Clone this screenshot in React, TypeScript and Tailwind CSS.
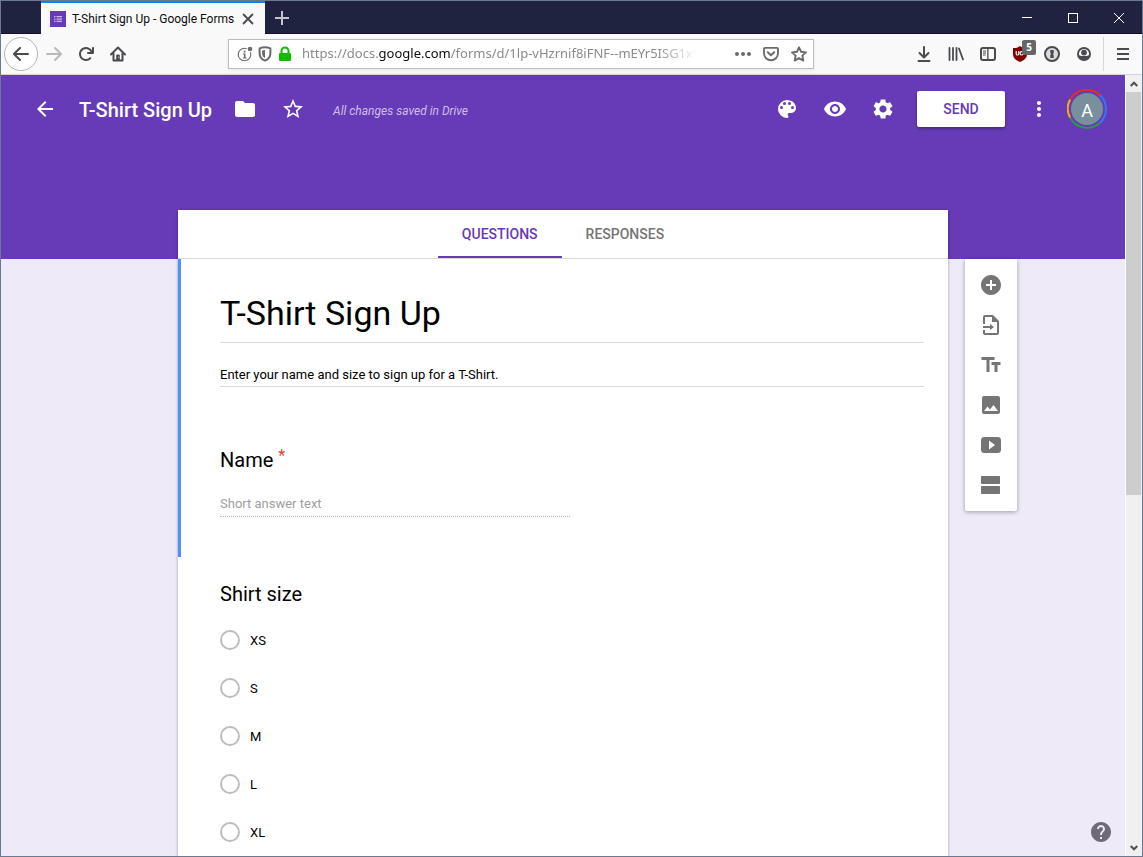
import type { ReactNode } from "react";
import {
  MdAddCircle,
  MdArrowBack,
  MdFolder,
  MdHelp,
  MdImage,
  MdMoreVert,
  MdPalette,
  MdSettings,
  MdStarBorder,
  MdTextFields,
  MdVisibility,
} from "react-icons/md";

const sizes = ["XS", "S", "M", "L", "XL"];

function Icon({ children }: { children: ReactNode }) {
  return (
    <svg viewBox="0 0 16 16" className="size-4 shrink-0" fill="currentColor" aria-hidden="true">
      {children}
    </svg>
  );
}

function ToolButton({ label, children }: { label: string; children: ReactNode }) {
  return (
    <button type="button" aria-label={label} className="relative flex size-8 shrink-0 items-center justify-center">
      {children}
    </button>
  );
}

function TitleBar() {
  return (
    <div className="flex h-[33px] shrink-0 bg-[#202340] pl-10 shadow-[inset_0_-1px_#140f26]">
      <div className="z-10 flex w-56 items-center border-t-2 border-[#0a84ff] bg-[#f9f9fa] pr-[9px] pl-[9px]">
        <svg viewBox="0 0 16 16" className="size-4 shrink-0" aria-hidden="true">
          <path fill="#673ab7" d="M0 0h16v16H0z" />
          <path fill="#c9b8e8" d="M4 5h1.500v1.300H4zM6.500 5H12v1.300H6.500zM4 7.400h1.500v1.300H4zM6.500 7.400H12v1.300H6.500zM4 9.800h1.500v1.300H4zM6.500 9.800H12v1.300H6.500z" />
        </svg>
        <span className="ml-1.5 flex-1 whitespace-nowrap font-[Roboto,sans-serif] text-[12px] text-[#0c0c0d]">
          T-Shirt Sign Up - Google Forms
        </span>
        <button type="button" aria-label="Close tab" className="flex size-4 shrink-0 items-center justify-center">
          <svg viewBox="0 0 12 12" className="size-3" fill="none" stroke="#4a4a4f" strokeWidth="1.800" strokeLinecap="round">
            <path d="M1.500 1.500l9 9M10.500 1.500l-9 9" />
          </svg>
        </button>
      </div>
      <button type="button" aria-label="New tab" className="flex w-[34px] items-center justify-center text-[#c5c5cf]">
        <svg viewBox="0 0 16 16" className="size-4" fill="none" stroke="currentColor" strokeWidth="2">
          <path d="M8 1v14M1 8h14" />
        </svg>
      </button>
      <div className="ml-auto flex text-white">
        <button type="button" aria-label="Minimize" className="flex w-[46px] items-center justify-center">
          <svg viewBox="0 0 10 10" className="size-2.5" shapeRendering="crispEdges">
            <path d="M0 4h10v1H0z" fill="currentColor" />
          </svg>
        </button>
        <button type="button" aria-label="Maximize" className="flex w-[46px] items-center justify-center">
          <span className="size-2.5 border border-white" />
        </button>
        <button type="button" aria-label="Close window" className="flex w-[46px] items-center justify-center">
          <svg viewBox="0 0 10 10" className="size-2.5" fill="none" stroke="currentColor">
            <path d="M0 0l10 10M10 0L0 10" />
          </svg>
        </button>
      </div>
    </div>
  );
}

function AddressBar() {
  return (
    <div className="ml-[94px] flex h-[30px] max-w-[586px] flex-1 items-center border border-[#bcbcbc] bg-white pr-1.5 pl-2 text-[#6b6b6e] shadow-[0_1px_3px_rgba(0,0,0,0.08)]">
      <div className="flex gap-1">
        <Icon>
          <circle cx="7.500" cy="8.500" r="6.300" fill="none" stroke="currentColor" strokeWidth="1.100" />
          <path d="M6.700 4.800h1.800v1.700H6.700zM6 7.500h2.500v4H9.500v1H6v-1h.900V8.500H6z" />
          <circle cx="13" cy="3" r="3.300" fill="#fff" />
          <circle cx="13" cy="3" r="2.300" />
        </Icon>
        <Icon>
          <path
            d="M8 1.300c1.800 0 3.700.4 5.400 1.100v4.800c0 3.600-2 6-5.400 7.500C4.600 13.200 2.600 10.800 2.600 7.200V2.400C4.300 1.700 6.200 1.300 8 1.300z"
            fill="none"
            stroke="currentColor"
            strokeWidth="2"
            strokeLinejoin="round"
          />
          <path d="M8 4v8c-1.800-1-2.900-2.500-2.900-4.800V4.500C6 4.200 7 4 8 4z" />
        </Icon>
        <svg viewBox="0 0 16 16" className="size-4 text-[#12bc00]" fill="currentColor" aria-hidden="true">
          <path d="M3 7h10a1 1 0 0 1 1 1v6a1 1 0 0 1-1 1H3a1 1 0 0 1-1-1V8a1 1 0 0 1 1-1z" />
          <path d="M4.500 8V5a3.500 3.500 0 0 1 7 0v3" fill="none" stroke="currentColor" strokeWidth="2" />
        </svg>
      </div>
      <div className="ml-[9px] min-w-0 flex-1 overflow-hidden whitespace-nowrap font-['Noto_Sans',sans-serif] text-[13px] text-[#8a8a8a] [mask-image:linear-gradient(to_right,#000_calc(100%_-_40px),transparent)]">
        https://docs.<span className="text-[#0c0c0d]">google.com</span>/forms/d/1lp-vHzrnif8iFNF--mEYr5ISG1x9
      </div>
      <div className="ml-[38px] flex w-[72px] shrink-0 justify-between">
        <button type="button" aria-label="Page actions">
          <Icon>
            <circle cx="2" cy="8" r="2" />
            <circle cx="8" cy="8" r="2" />
            <circle cx="14" cy="8" r="2" />
          </Icon>
        </button>
        <button type="button" aria-label="Save to Pocket">
          <Icon>
            <path d="M2 1.900h12c.6 0 1 .4 1 1V7.300a7 7 0 0 1-14 0V2.900c0-.6.4-1 1-1z" fill="none" stroke="currentColor" strokeWidth="1.900" />
            <path d="M4.800 6.300L8 9.300l3.200-3" fill="none" stroke="currentColor" strokeWidth="2" strokeLinecap="round" strokeLinejoin="round" />
          </Icon>
        </button>
        <button type="button" aria-label="Bookmark this page">
          <Icon>
            <path
              d="M8 1.300l2.050 4.450 4.950.6-3.650 3.300.95 4.900L8 12.100l-4.300 2.450.95-4.900L1 6.350l4.950-.6z"
              fill="none"
              stroke="currentColor"
              strokeWidth="1.900"
              strokeLinejoin="round"
            />
          </Icon>
        </button>
      </div>
    </div>
  );
}

function BrowserToolbar() {
  return (
    <div className="flex h-[41px] shrink-0 items-center border-b border-[#d4d4d6] bg-[#f9f9fa] pl-[3px] text-[#4a4a4f]">
      <button
        type="button"
        aria-label="Back"
        className="flex size-[34px] shrink-0 items-center justify-center rounded-full border border-[#b5b5b5] bg-white"
      >
        <Icon>
          <path d="M15 7H3.414l4.293-4.293a1 1 0 0 0-1.414-1.414l-6 6a1 1 0 0 0 0 1.414l6 6a1 1 0 0 0 1.414-1.414L3.414 9H15a1 1 0 0 0 0-2z" />
        </Icon>
      </button>
      <button type="button" aria-label="Forward" disabled className="flex size-8 shrink-0 items-center justify-center text-[#b9b9bb]">
        <Icon>
          <path d="M1 7h11.586L8.293 2.707a1 1 0 0 1 1.414-1.414l6 6a1 1 0 0 1 0 1.414l-6 6a1 1 0 0 1-1.414-1.414L12.586 9H1a1 1 0 0 1 0-2z" />
        </Icon>
      </button>
      <ToolButton label="Reload">
        <Icon>
          <path d="M15 1a1 1 0 0 0-1 1v2.418A6.995 6.995 0 1 0 8 15a6.954 6.954 0 0 0 4.950-2.050 1 1 0 0 0-1.414-1.414A5.019 5.019 0 1 1 12.549 6H10a1 1 0 0 0 0 2h5a1 1 0 0 0 1-1V2a1 1 0 0 0-1-1z" />
        </Icon>
      </ToolButton>
      <ToolButton label="Home">
        <Icon>
          <path d="M1 8.500l7-7 7 7M3.500 7v7.500h9V7" fill="none" stroke="currentColor" strokeWidth="2" strokeLinecap="round" strokeLinejoin="round" />
          <path d="M6.200 14V9.500a1 1 0 0 1 1-1h1.600a1 1 0 0 1 1 1V14z" />
          <path d="M8.200 10.800h.8v1h-.8z" fill="#fff" />
        </Icon>
      </ToolButton>
      <AddressBar />
      <div className="ml-auto flex shrink-0 items-center">
        <ToolButton label="Downloads">
          <Icon>
            <path d="M8 1v10M3.500 7L8 11.500 12.500 7M2.500 15h11" fill="none" stroke="currentColor" strokeWidth="2" strokeLinecap="round" strokeLinejoin="round" />
          </Icon>
        </ToolButton>
        <ToolButton label="Library">
          <Icon>
            <path d="M1.500 2v12M5 2v12M8.500 2v12M11 2.500l4 11" fill="none" stroke="currentColor" strokeWidth="1.800" strokeLinecap="round" />
          </Icon>
        </ToolButton>
        <ToolButton label="Sidebars">
          <Icon>
            <rect x="1" y="2" width="14" height="12" rx="2" fill="none" stroke="currentColor" strokeWidth="2" />
            <path d="M7.200 2h1.300v12H7.200zM3 4.500h3v1H3zM3 6.500h3v1H3zM3 8.500h2.500v1H3z" />
          </Icon>
        </ToolButton>
        <ToolButton label="uBlock Origin">
          <svg viewBox="0 0 16 16" className="size-4" aria-hidden="true">
            <path fill="#800000" d="M8 0c2 1.500 4 2 7 2v6c0 4-2.500 6-7 8-4.500-2-7-4-7-8V2c3 0 5-.5 7-2z" />
            <path d="M4.200 5v2.700a1.300 1.300 0 0 0 2.600 0V5" fill="none" stroke="#fff" strokeWidth="1.200" />
            <circle cx="9.700" cy="7.300" r="1.700" fill="none" stroke="#fff" strokeWidth="1.200" />
          </svg>
          <span className="absolute top-0.5 right-0 flex h-[15px] w-3.5 items-center justify-center rounded-xs bg-[#666] font-['Noto_Sans',sans-serif] text-[10px] font-bold text-white">
            5
          </span>
        </ToolButton>
        <ToolButton label="1Password">
          <Icon>
            <circle cx="8" cy="8" r="7" fill="#dcdcdc" stroke="currentColor" strokeWidth="2" />
            <path d="M6.300 4h3.400v3.300l-.8.900.8.700V12H6.300V8.700l.9-.9-.9-.700z" />
          </Icon>
        </ToolButton>
        <ToolButton label="Firefox account">
          <Icon>
            <path
              fillRule="evenodd"
              d="M8 1a7 7 0 1 0 0 14A7 7 0 0 0 8 1zM3.100 9.200A5.100 5.100 0 0 1 8 2.900a5.100 5.100 0 0 1 4.900 6.300c-.8 0-1.300.2-1.900.8H5c-.6-.6-1.100-.8-1.900-.8z"
            />
            <circle cx="8" cy="6.600" r="2.900" />
          </Icon>
        </ToolButton>
        <div className="ml-[3px] h-[34px] w-px bg-[#d7d7db]" />
        <button type="button" aria-label="Open menu" className="flex w-[38px] items-center justify-center">
          <svg viewBox="0 0 12 12" className="size-3" fill="currentColor">
            <path d="M0 0h12v2H0zM0 5h12v2H0zM0 10h12v2H0z" />
          </svg>
        </button>
      </div>
    </div>
  );
}

function FormHeader() {
  return (
    <header className="flex h-[68px] shrink-0 items-center pr-[18px] pl-8 text-white">
      <button type="button" aria-label="Forms home">
        <MdArrowBack className="size-6" />
      </button>
      <h1 className="ml-[22px] pt-0.5 text-[20px] font-medium whitespace-nowrap">T-Shirt Sign Up</h1>
      <button type="button" aria-label="Move to folder" className="ml-[21px]">
        <MdFolder className="size-6" />
      </button>
      <button type="button" aria-label="Star" className="ml-6">
        <MdStarBorder className="size-6" />
      </button>
      <span className="ml-7 pt-1 text-[12px] whitespace-nowrap text-[#cdbfe7] italic">All changes saved in Drive</span>
      <div className="ml-auto flex shrink-0 items-center">
        <button type="button" aria-label="Customize theme">
          <svg viewBox="0 0 24 24" className="size-6" fill="currentColor" aria-hidden="true">
            <path d="M12 3a9 9 0 0 0 0 18c.83 0 1.500-.67 1.500-1.500 0-.39-.15-.74-.39-1.010-.23-.26-.38-.61-.38-.99 0-.83.67-1.500 1.500-1.500H16c2.760 0 5-2.240 5-5 0-4.420-4.030-8-9-8zm-5.500 9a1.500 1.500 0 1 1 0-3 1.500 1.500 0 0 1 0 3zm3-4a1.500 1.500 0 1 1 0-3 1.500 1.500 0 0 1 0 3zm5 0a1.500 1.500 0 1 1 0-3 1.500 1.500 0 0 1 0 3zm3 4a1.500 1.500 0 1 1 0-3 1.500 1.500 0 0 1 0 3z" />
          </svg>
        </button>
        <button type="button" aria-label="Preview" className="ml-6">
          <MdVisibility className="size-6" />
        </button>
        <button type="button" aria-label="Settings" className="ml-6">
          <MdSettings className="size-6" />
        </button>
        <button
          type="button"
          className="ml-[22px] h-9 w-[88px] rounded-xs bg-white text-[14px] font-medium text-[#673ab7] shadow-[0_2px_3px_rgba(0,0,0,0.3)]"
        >
          SEND
        </button>
        <button type="button" aria-label="More" className="ml-[22px]">
          <MdMoreVert className="size-6" />
        </button>
        <button type="button" aria-label="Google account" className="relative ml-4 flex size-10 items-center justify-center">
          <svg viewBox="0 0 40 40" className="absolute inset-0 size-10" fill="none" strokeWidth="2" aria-hidden="true">
            <path d="M3.100 10.500A19 19 0 0 1 32.700 5.900" stroke="#e62d20" />
            <path d="M32.700 5.900A19 19 0 0 1 32.700 34.100" stroke="#3478ee" />
            <path d="M32.700 34.100A19 19 0 0 1 3.100 28.500" stroke="#279b48" />
            <path d="M3.100 28.500A19 19 0 0 1 3.100 10.500" stroke="#fba90a" />
          </svg>
          <span className="flex size-8 items-center justify-center rounded-full bg-[#78909c] pt-0.5 text-[18px]">A</span>
        </button>
      </div>
    </header>
  );
}

function FormCard() {
  return (
    <main className="bg-white text-black shadow-[0_1px_3px_rgba(0,0,0,0.35)]">
      <div role="tablist" className="flex h-[49px] justify-center border-b border-[#dadada] text-[14px] font-medium">
        <button type="button" role="tab" aria-selected="true" className="border-b-2 border-[#673ab7] px-6 pt-0.5 text-[#673ab7]">
          QUESTIONS
        </button>
        <button type="button" role="tab" aria-selected="false" className="px-6 text-[#757575]">
          RESPONSES
        </button>
      </div>

      <section className="h-[298px] border-l-[3px] border-[#4d90fe] pt-6 pr-6 pl-[39px]">
        <input
          aria-label="Form title"
          defaultValue="T-Shirt Sign Up"
          className="block h-[60px] w-full border-b border-[#dadada] text-[34px] outline-none"
        />
        <input
          aria-label="Form description"
          defaultValue="Enter your name and size to sign up for a T-Shirt."
          className="mt-5 block h-6 w-full border-b border-[#dadada] text-[13px] outline-none"
        />
        <label htmlFor="name" className="mt-[59px] flex h-7 text-[20px] leading-7">
          Name
          <span className="ml-[5px] text-[16px] leading-5 text-[#db4437]">*</span>
        </label>
        <input
          id="name"
          placeholder="Short answer text"
          className="mt-[17px] block h-[26px] w-[350px] border-b border-dotted border-[#b5b5b5] text-[13px] outline-none placeholder:text-[#9e9e9e]"
        />
      </section>

      <fieldset className="pt-[23px] pl-[42px]">
        <legend className="float-left w-full text-[20px] leading-7">Shirt size</legend>
        <div className="clear-both flex flex-col gap-7 pt-[22px]">
          {sizes.map((size) => (
            <label key={size} className="flex h-5 items-center gap-2.5 text-[13px]">
              <input type="radio" name="size" value={size} className="size-5 appearance-none rounded-full border-2 border-[#bdbdbd] checked:border-[#673ab7]" />
              <span className="pt-0.5">{size}</span>
            </label>
          ))}
        </div>
      </fieldset>
      <div className="h-12" />
    </main>
  );
}

function SideToolbar() {
  return (
    <aside className="mt-[49px] ml-[17px] flex w-[52px] flex-col items-center gap-4 self-start rounded-b-xs bg-white py-3.5 text-[#757575] shadow-[0_1px_4px_rgba(0,0,0,0.35)]">
      <button type="button" aria-label="Add question">
        <MdAddCircle className="size-6" />
      </button>
      <button type="button" aria-label="Import questions">
        <svg viewBox="0 0 24 24" className="size-6" fill="currentColor">
          <path d="M14 2H6a2 2 0 0 0-2 2v7h2V4h7v5h5v11H6v-3H4v3a2 2 0 0 0 2 2h12a2 2 0 0 0 2-2V8zM4 13v2h7v2l4-3-4-3v2z" />
        </svg>
      </button>
      <button type="button" aria-label="Add title and description">
        <MdTextFields className="size-6" />
      </button>
      <button type="button" aria-label="Add image">
        <MdImage className="size-6" />
      </button>
      <button type="button" aria-label="Add video">
        <svg viewBox="0 0 24 24" className="size-6" fill="currentColor">
          <path fillRule="evenodd" d="M5.500 4h13C20.800 4 22 5 22 7.500v9c0 2.500-1.200 3.500-3.500 3.500h-13C3.200 20 2 19 2 16.500v-9C2 5 3.200 4 5.500 4zM10 7.500v9l6-4.500z" />
        </svg>
      </button>
      <button type="button" aria-label="Add section">
        <svg viewBox="0 0 24 24" className="size-6" fill="currentColor">
          <rect x="2" y="3" width="19" height="8" rx="0.700" />
          <rect x="2" y="13" width="19" height="8" rx="0.700" />
        </svg>
      </button>
    </aside>
  );
}

function Scrollbar() {
  return (
    <div className="flex w-[17px] shrink-0 flex-col border-l border-white bg-[#f0f0f0] text-[#505050]" aria-hidden="true">
      <div className="flex h-[17px] items-center justify-center">
        <svg viewBox="0 0 8 6" className="h-1.5 w-2" fill="none" stroke="currentColor" strokeWidth="2">
          <path d="M.7 5L4 1.700 7.300 5" />
        </svg>
      </div>
      <div className="flex-1">
        <div className="h-[54%] w-[15px] bg-[#cdcdcd]" />
      </div>
      <div className="flex h-[17px] items-center justify-center">
        <svg viewBox="0 0 8 6" className="h-1.5 w-2" fill="none" stroke="currentColor" strokeWidth="2">
          <path d="M.7 1L4 4.300 7.300 1" />
        </svg>
      </div>
    </div>
  );
}

export default function App() {
  return (
    <div className="flex h-screen flex-col border border-[#6b7a90] bg-white font-[Roboto,sans-serif]">
      <TitleBar />
      <BrowserToolbar />
      <div className="flex min-h-0 flex-1">
        <div className="relative min-w-0 flex-1 overflow-hidden bg-[linear-gradient(#673ab7_184px,#eeeaf8_184px)]">
          <FormHeader />
          <div className="mt-[67px] grid grid-cols-[1fr_minmax(0,770px)_1fr]">
            <div />
            <FormCard />
            <SideToolbar />
          </div>
          <button type="button" aria-label="Help" className="absolute right-3 bottom-3 text-[#6f6a75]">
            <MdHelp className="size-6" />
          </button>
        </div>
        <Scrollbar />
      </div>
    </div>
  );
}
